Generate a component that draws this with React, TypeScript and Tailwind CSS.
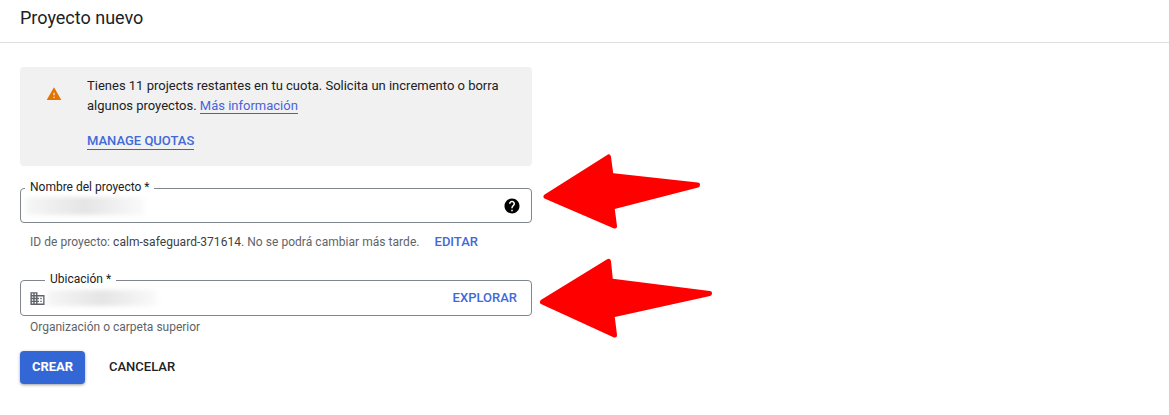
const FONT = 'font-["Roboto","Liberation_Sans",sans-serif]';

function Arrows() {
  return (
    <svg className="absolute left-0 top-0 pointer-events-none" width="1169" height="415" viewBox="0 0 1169 415">
      <g fill="#ff0000" stroke="#ff0000" strokeWidth="5" strokeLinejoin="round">
        <path d="M546 196.5 L608.5 157 L611 175.5 L697.5 185 L612 207 L614.5 226 Z" />
        <path d="M542.5 302 L608.5 261.5 L610.5 281 L709.5 293.5 L612 315 L614.5 335 Z" />
      </g>
    </svg>
  );
}

function Warning() {
  return (
    <svg width="16" height="16" viewBox="0 0 24 24" className="fill-[#e37400] shrink-0">
      <path d="M1 21h22L12 2 1 21zm12-3h-2v-2h2v2zm0-4h-2v-4h2v4z" />
    </svg>
  );
}

function Help() {
  return (
    <svg width="18" height="18" viewBox="0 0 24 24" className="fill-black">
      <path d="M12 2C6.48 2 2 6.48 2 12s4.48 10 10 10 10-4.48 10-10S17.52 2 12 2zm1 17h-2v-2h2v2zm2.07-7.75l-.9.92C13.45 12.9 13 13.5 13 15h-2v-.5c0-1.1.45-2.1 1.17-2.83l1.24-1.26c.37-.36.59-.86.59-1.41 0-1.1-.9-2-2-2s-2 .9-2 2H8c0-2.21 1.79-4 4-4s4 1.79 4 4c0 .88-.36 1.68-.93 2.25z" />
    </svg>
  );
}

function Domain() {
  return (
    <svg width="17" height="17" viewBox="0 0 24 24" className="fill-[#5f6368] shrink-0">
      <path d="M12 7V3H2v18h20V7H12zM6 19H4v-2h2v2zm0-4H4v-2h2v2zm0-4H4V9h2v2zm0-4H4V5h2v2zm4 12H8v-2h2v2zm0-4H8v-2h2v2zm0-4H8V9h2v2zm0-4H8V5h2v2zm10 12h-8v-2h2v-2h-2v-2h2v-2h-2V9h8v10zm-2-8h-2v2h2v-2zm0 4h-2v2h2v-2z" />
    </svg>
  );
}

function Smudge({ className }: { className: string }) {
  return <div className={`bg-gradient-to-r from-[#f6f6f6] via-[#e5e5e5] to-[#fafafa] ${className}`} />;
}

export default function App() {
  return (
    <div className={`relative w-[1169px] h-[415px] bg-white overflow-hidden text-[#202124] ${FONT}`}>
      <header className="h-[43px] border-b border-[#e0e0e0] pl-5 pt-[6px]">
        <h1 className="text-lg leading-6 font-normal">Proyecto nuevo</h1>
      </header>

      <main className="w-[512px] ml-5 mt-6">
        <div className="h-[99px] rounded bg-[#f1f1f1] flex">
          <div className="w-[67px] pl-[26px] pt-[19px] shrink-0">
            <Warning />
          </div>
          <div className="pt-[9px] text-[13px] leading-5 w-[430px]">
            <p>
              Tienes 11 projects restantes en tu cuota. Solicita un incremento o borra algunos proyectos.{' '}
              <a className="text-[#4b63d8] border-b border-[#3367d6]">Más información</a>
            </p>
            <a className="inline-block mt-[16px] text-[13px] leading-[17px] font-medium text-[#3f6ad8] border-b border-[#3367d6]">
              MANAGE QUOTAS
            </a>
          </div>
        </div>

        <div className="relative mt-[22px] h-[35px] rounded border border-[#80868b] flex items-center pl-[5px] pr-[10px]">
          <span className="absolute left-[4px] -top-[10px] bg-white px-[5px] text-xs leading-4">Nombre del proyecto *</span>
          <Smudge className="w-[118px] h-[18px] blur-[2px]" />
          <div className="ml-auto">
            <Help />
          </div>
        </div>
        <div className="mt-[11px] pl-[10px] h-4 flex text-xs leading-4 tracking-[0.04px] text-[#5f6368]">
          <span>
            ID de proyecto: <span className="text-[#3c4043]">calm-safeguard-371614</span>. No se podrá cambiar más tarde.
          </span>
          <a className="ml-[15px] text-[13px] font-medium tracking-normal text-[#3f6ad8]">EDITAR</a>
        </div>

        <div className="relative mt-[30px] h-[36px] rounded border border-[#80868b] flex items-center pl-[8px] pr-[14px]">
          <span className="absolute left-[24px] -top-[10px] bg-white px-[5px] text-xs leading-4">Ubicación *</span>
          <Domain />
          <Smudge className="ml-[1px] w-[110px] h-[16px] blur-[2px]" />
          <a className="ml-auto text-[13px] font-medium text-[#3f6ad8]">EXPLORAR</a>
        </div>
        <p className="mt-[3px] pl-[10px] text-xs leading-4 text-[#5f6368]">Organización o carpeta superior</p>

        <div className="mt-[16px] flex items-center">
          <button className="w-[65px] h-[33px] pb-[2px] rounded bg-[#3367d6] text-white text-[13px] font-bold shadow-[0_1px_3px_rgba(60,64,67,0.5)]">
            CREAR
          </button>
          <button className="ml-6 pb-[2px] text-[13px] font-medium text-[#202124]">CANCELAR</button>
        </div>
      </main>

      <Arrows />
    </div>
  );
}
